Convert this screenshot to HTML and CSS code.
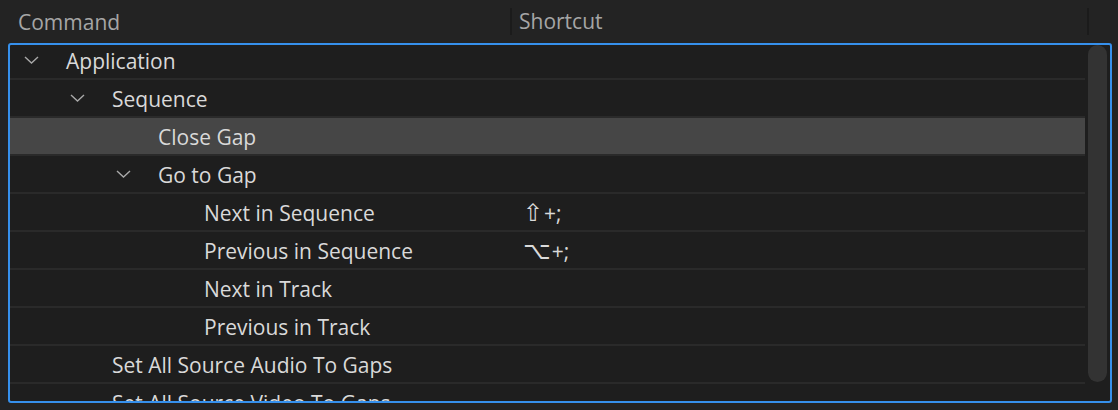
FILE: index.html
```html
<!DOCTYPE html>
<html lang="en">

<head>
    <meta charset="UTF-8">
    <title>Keyboard Shortcuts</title>
    <link rel="stylesheet" href="styles.css">
</head>

<body>
    <div class="header">
        <div class="col-command">Command</div>
        <div class="col-shortcut">Shortcut</div>
        <div class="col-end"></div>
    </div>
    <div class="panel">
        <div class="list">
            <div class="row lvl0">
                <span class="toggle"><svg width="15" height="8" viewBox="0 0 15 8"><path d="M1 1 L7.5 7 L14 1" /></svg></span>
                <span class="cmd">Application</span>
                <span class="key"></span>
            </div>
            <div class="row lvl1">
                <span class="toggle"><svg width="15" height="8" viewBox="0 0 15 8"><path d="M1 1 L7.5 7 L14 1" /></svg></span>
                <span class="cmd">Sequence</span>
                <span class="key"></span>
            </div>
            <div class="row lvl2 selected">
                <span class="toggle"></span>
                <span class="cmd">Close Gap</span>
                <span class="key"></span>
            </div>
            <div class="row lvl2">
                <span class="toggle"><svg width="15" height="8" viewBox="0 0 15 8"><path d="M1 1 L7.5 7 L14 1" /></svg></span>
                <span class="cmd">Go to Gap</span>
                <span class="key"></span>
            </div>
            <div class="row lvl3">
                <span class="toggle"></span>
                <span class="cmd">Next in Sequence</span>
                <span class="key"><span class="mod">⇧</span>+;</span>
            </div>
            <div class="row lvl3">
                <span class="toggle"></span>
                <span class="cmd">Previous in Sequence</span>
                <span class="key"><span class="mod">⌥</span>+;</span>
            </div>
            <div class="row lvl3">
                <span class="toggle"></span>
                <span class="cmd">Next in Track</span>
                <span class="key"></span>
            </div>
            <div class="row lvl3">
                <span class="toggle"></span>
                <span class="cmd">Previous in Track</span>
                <span class="key"></span>
            </div>
            <div class="row lvl1">
                <span class="toggle"></span>
                <span class="cmd">Set All Source Audio To Gaps</span>
                <span class="key"></span>
            </div>
            <div class="row lvl1">
                <span class="toggle"></span>
                <span class="cmd">Set All Source Video To Gaps</span>
                <span class="key"></span>
            </div>
        </div>
        <div class="scrollbar">
            <div class="thumb"></div>
        </div>
    </div>
</body>

</html>
```

FILE: styles.css
```css
body {
    background: #232323;
    color: #d9d9d9;
    font-family: "Open Sans", "Noto Sans", sans-serif;
    font-size: 21px;
    margin: 0;
    overflow: hidden;
}

.header {
    display: flex;
    align-items: center;
    height: 43px;
    color: #a6a6a6;
}

.col-command {
    width: 492px;
    padding-left: 18px;
}

.col-shortcut {
    flex: 1;
    padding-left: 7px;
    border-left: 2px solid #1b1b1b;
    line-height: 27px;
}

.col-end {
    width: 29px;
    height: 27px;
    border-left: 2px solid #1b1b1b;
}

.panel {
    display: flex;
    height: 356px;
    margin: 0 6px 0 8px;
    border: 2px solid #3690ec;
    border-radius: 3px;
    background: #1e1e1e;
    overflow: hidden;
}

.list {
    width: 1075px;
    margin-top: -3px;
}

.row {
    display: flex;
    align-items: center;
    height: 36px;
    border-bottom: 2px solid #2a2a2a;
}

.row.selected {
    background: #464646;
}

.lvl0 { padding-left: 14px; }
.lvl1 { padding-left: 60px; }
.lvl2 { padding-left: 106px; }
.lvl3 { padding-left: 152px; }

.toggle {
    width: 42px;
    display: flex;
    align-items: center;
}

.toggle svg {
    fill: none;
    stroke: #a8a8a8;
    stroke-width: 1.4;
}

.cmd {
    flex: none;
    white-space: nowrap;
    padding-top: 2px;
}

.lvl0 .cmd { width: 444px; }
.lvl1 .cmd { width: 398px; }
.lvl2 .cmd { width: 352px; }
.lvl3 .cmd { width: 306px; }

.key {
    padding-left: 13px;
    padding-top: 2px;
    white-space: nowrap;
}

.mod {
    font-family: "DejaVu Sans", sans-serif;
    font-size: 24px;
    margin-right: 1px;
}

.scrollbar {
    padding: 0 3px 0 3px;
}

.thumb {
    width: 19px;
    height: 337px;
    background: #333333;
    border-radius: 10px;
}
```
